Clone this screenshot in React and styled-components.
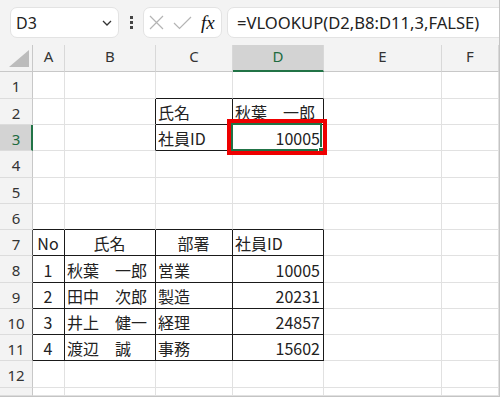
import React from 'react';
import styled, { createGlobalStyle } from 'styled-components';

const GlobalStyle = createGlobalStyle`
  html, body { margin: 0; padding: 0; background: #fff; }
  body { font-family: "Noto Sans", "Noto Sans CJK JP", sans-serif; }
`;

const Frame = styled.div`
  position: relative;
  width: 500px;
  height: 397px;
  box-sizing: border-box;
  border-right: 1px solid #c4c4c4;
  border-bottom: 1px solid #c4c4c4;
  overflow: hidden;
  display: flex;
  flex-direction: column;
  background: #fff;
`;

const Toolbar = styled.div`
  height: 45px;
  flex: none;
  box-sizing: border-box;
  background: #f3f3f3;
  display: flex;
  align-items: center;
  padding-left: 10px;
`;

const Box = styled.div`
  height: 31px;
  box-sizing: border-box;
  background: #fff;
  border: 1px solid #e3e3e3;
  border-radius: 7px;
  display: flex;
  align-items: center;
`;

const NameBox = styled(Box)`
  width: 109px;
  justify-content: space-between;
  padding: 0 6px 0 5px;
  font-family: "Noto Sans", sans-serif;
  font-size: 16px;
  color: #222;
`;

const Dots = styled.div`
  display: flex;
  flex-direction: column;
  gap: 2px;
  margin: 0 10px 0 11px;
`;

const Dot = styled.span`
  width: 3px;
  height: 3px;
  background: #444;
`;

const FxBox = styled(Box)`
  width: 79px;
  padding-left: 5px;
  gap: 9px;
`;

const FxLabel = styled.span`
  font-family: "Liberation Serif", "DejaVu Serif", serif;
  font-style: italic;
  font-size: 19px;
  color: #111;
  line-height: 1;
`;

const FormulaBox = styled(Box)`
  flex: 1;
  margin-left: 5px;
  margin-right: -12px;
  padding-left: 9px;
  font-family: "Noto Sans", sans-serif;
  font-size: 16.6px;
  color: #222;
  white-space: nowrap;
`;

const Sheet = styled.div`
  flex: 1;
  display: grid;
  grid-template-columns: 33px 32px 91px 77px 91px 118px 1fr;
  grid-template-rows: 27px 27px 26px 26px 27px 26px 26px 26px 27px 26px 26px 26px 27px 1fr;
`;

const Corner = styled.div`
  position: relative;
  background: #f3f3f3;
  border-right: 1px solid #c8c8c8;
  border-bottom: 1px solid #c8c8c8;
  box-sizing: border-box;
  &::after {
    content: '';
    position: absolute;
    right: 3px;
    bottom: 4px;
    width: 20px;
    height: 17px;
    background: #bcbcbc;
    clip-path: polygon(100% 0, 100% 100%, 0 100%);
  }
`;

const ColHeader = styled.div`
  box-sizing: border-box;
  background: ${p => (p.$sel ? '#d3d3d3' : '#f3f3f3')};
  border-right: 1px solid #d8d8d8;
  border-bottom: ${p => (p.$sel ? '2px solid #217346' : '1px solid #c8c8c8')};
  display: flex;
  align-items: center;
  justify-content: center;
  padding-bottom: ${p => (p.$sel ? '3px' : '4px')};
  font-family: "Noto Sans", sans-serif;
  font-size: 15px;
  color: ${p => (p.$sel ? '#1d6b3f' : '#333')};
`;

const RowHeader = styled.div`
  box-sizing: border-box;
  overflow: hidden;
  background: ${p => (p.$sel ? '#d3d3d3' : '#f3f3f3')};
  border-right: ${p => (p.$sel ? '2px solid #217346' : `1px solid ${p.$edge}`)};
  border-bottom: 1px solid #dcdcdc;
  display: flex;
  align-items: center;
  justify-content: center;
  padding-top: 2px;
  padding-left: ${p => (p.$sel ? '1px' : '0')};
  font-family: "Noto Sans", sans-serif;
  font-size: 15px;
  color: ${p => (p.$sel ? '#1d6b3f' : '#333')};
`;

const Cell = styled.div`
  box-sizing: border-box;
  min-width: 0;
  overflow: hidden;
  white-space: nowrap;
  border-right: 1px solid ${p => p.$rc};
  border-bottom: 1px solid ${p => p.$bc};
  display: flex;
  align-items: center;
  justify-content: ${p =>
    p.$align === 'right' ? 'flex-end' : p.$align === 'center' ? 'center' : 'flex-start'};
  padding: 1px 3px 0 2px;
  font-family: "Noto Sans CJK JP", sans-serif;
  font-size: 16px;
  color: #222;
`;

const Selection = styled.div`
  position: absolute;
  left: 231px;
  top: 123px;
  width: 91px;
  height: 28px;
  box-sizing: border-box;
  border: 2px solid #217346;
`;

const Handle = styled.div`
  position: absolute;
  left: 318px;
  top: 147px;
  width: 6px;
  height: 6px;
  box-sizing: border-box;
  background: #217346;
  border: 1px solid #fff;
`;

const Annotation = styled.div`
  position: absolute;
  left: 227px;
  top: 119px;
  width: 100px;
  height: 36px;
  box-sizing: border-box;
  border: 4px solid #ee0000;
`;

const COLS = ['A', 'B', 'C', 'D', 'E', 'F'];
const ROWS = 13;
const VISIBLE_LABELS = 12;

const DATA = {
  C2: ['氏名'],
  D2: ['秋葉　一郎'],
  C3: ['社員ID'],
  D3: ['10005', 'right'],
  A7: ['No', 'center'],
  B7: ['氏名', 'center'],
  C7: ['部署', 'center'],
  D7: ['社員ID'],
  A8: ['1', 'center'], B8: ['秋葉　一郎'], C8: ['営業'], D8: ['10005', 'right'],
  A9: ['2', 'center'], B9: ['田中　次郎'], C9: ['製造'], D9: ['20231', 'right'],
  A10: ['3', 'center'], B10: ['井上　健一'], C10: ['経理'], D10: ['24857', 'right'],
  A11: ['4', 'center'], B11: ['渡辺　誠'], C11: ['事務'], D11: ['15602', 'right'],
};

const BOXES = [
  { c1: 3, c2: 4, r1: 2, r2: 3 },
  { c1: 1, c2: 4, r1: 7, r2: 11 },
];

const inBox = (r, c) => BOXES.some(b => r >= b.r1 && r <= b.r2 && c >= b.c1 && c <= b.c2);

const GRID = '#e1e1e1';
const BLACK = '#1a1a1a';

function XIcon() {
  return (
    <svg width="15" height="15" viewBox="0 0 15 15">
      <path d="M1 1 L14 14 M14 1 L1 14" stroke="#b4b4b4" strokeWidth="1.2" fill="none" />
    </svg>
  );
}

function CheckIcon() {
  return (
    <svg width="19" height="14" viewBox="0 0 19 14">
      <path d="M1 7 L6.5 12.5 L18 1" stroke="#b4b4b4" strokeWidth="1.2" fill="none" />
    </svg>
  );
}

function Chevron() {
  return (
    <svg width="10" height="6" viewBox="0 0 10 6">
      <path d="M1 1 L5 5 L9 1" stroke="#333" strokeWidth="1.3" fill="none" />
    </svg>
  );
}

export default function App() {
  const cells = [];
  cells.push(<Corner key="corner" />);
  COLS.forEach(c => cells.push(<ColHeader key={'h' + c} $sel={c === 'D'}>{c}</ColHeader>));
  for (let r = 1; r <= ROWS; r++) {
    cells.push(
      <RowHeader key={'r' + r} $sel={r === 3} $edge={inBox(r, 1) ? '#555' : '#c8c8c8'}>
        {r <= VISIBLE_LABELS ? r : ''}
      </RowHeader>
    );
    COLS.forEach((col, i) => {
      const c = i + 1;
      const d = DATA[col + r];
      const rc = inBox(r, c) || inBox(r, c + 1) ? BLACK : GRID;
      const bc = inBox(r, c) || inBox(r + 1, c) ? BLACK : GRID;
      cells.push(
        <Cell key={col + r} $rc={rc} $bc={bc} $align={d ? d[1] : undefined}>
          {d ? d[0] : ''}
        </Cell>
      );
    });
  }

  return (
    <Frame>
      <GlobalStyle />
      <Toolbar>
        <NameBox>
          <span>D3</span>
          <Chevron />
        </NameBox>
        <Dots>
          <Dot />
          <Dot />
          <Dot />
        </Dots>
        <FxBox>
          <XIcon />
          <CheckIcon />
          <FxLabel>fx</FxLabel>
        </FxBox>
        <FormulaBox>=VLOOKUP(D2,B8:D11,3,FALSE)</FormulaBox>
      </Toolbar>
      <Sheet>{cells}</Sheet>
      <Selection />
      <Handle />
      <Annotation />
    </Frame>
  );
}
